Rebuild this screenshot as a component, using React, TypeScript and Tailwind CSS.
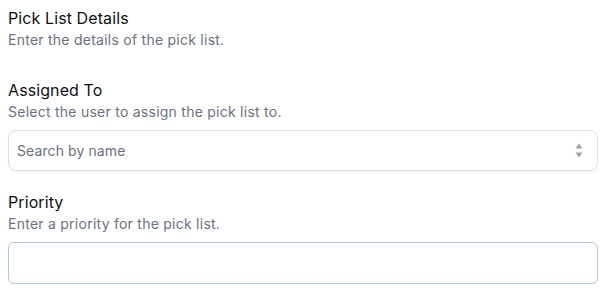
import React from "react";

export default function App() {
  return (
    <div className="w-[612px] h-[308px] bg-white pl-2 pt-[6px] font-['Inter',sans-serif]">
      <div>
        <div className="text-[16px] leading-[24px] text-[#111111] tracking-[0.1px]">Pick List Details</div>
        <div className="text-[14px] leading-[20px] text-[#6b7280] tracking-[0.25px]">Enter the details of the pick list.</div>
      </div>
      <div className="mt-[28px]">
        <div className="text-[16px] leading-[24px] text-[#111111] tracking-[0.1px]">Assigned To</div>
        <div className="text-[14px] leading-[20px] text-[#6b7280] tracking-[0.25px]">Select the user to assign the pick list to.</div>
        <div className="mt-2 w-[590px] h-[41px] rounded-lg border border-[#e0e0e0] shadow-[0_1px_2px_rgba(0,0,0,0.06)] flex items-center justify-between pl-2 pr-[14px]">
          <span className="text-[14px] text-[#6b7280] tracking-[0.1px]">Search by name</span>
          <svg width="8" height="15" viewBox="0 0 8 15" className="fill-[#9ca3af]">
            <path d="M4 0.5 L7.5 5.5 L0.5 5.5 Z" />
            <path d="M4 14.5 L7.5 9.5 L0.5 9.5 Z" />
          </svg>
        </div>
      </div>
      <div className="mt-[19px]">
        <div className="text-[16px] leading-[24px] text-[#111111] tracking-[0.1px]">Priority</div>
        <div className="text-[14px] leading-[20px] text-[#6b7280] tracking-[0.25px]">Enter a priority for the pick list.</div>
        <div className="mt-2 w-[590px] h-[42px] rounded-md border border-[#b4c6da]"></div>
      </div>
    </div>
  );
}
